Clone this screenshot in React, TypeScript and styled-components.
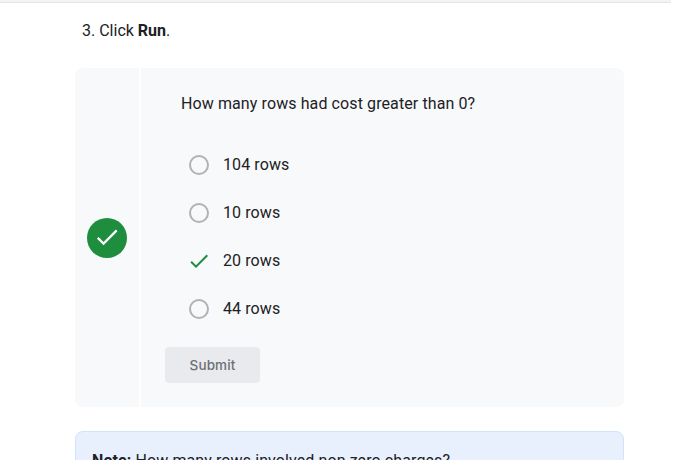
import React from "react";
import styled, { createGlobalStyle } from "styled-components";

const GlobalStyle = createGlobalStyle`
  * { box-sizing: border-box; }
  body {
    margin: 0;
    background: #fff;
    overflow: hidden;
    color: #202124;
    font: 400 16px/24px Roboto, "Noto Sans", sans-serif;
  }
`;

const Page = styled.div`
  height: 460px;
  overflow: hidden;
`;

const TopBar = styled.div`
  width: 671px;
  height: 3px;
  background: #f1f3f4;
  border-bottom: 1px solid #e3e6e9;
`;

const Content = styled.main`
  width: 549px;
  margin-left: 75px;
`;

const Step = styled.p`
  margin: 0;
  padding: 16px 0 25px 7px;
`;

const Quiz = styled.section`
  display: flex;
  gap: 2px;
  height: 339px;
  border-radius: 8px;
  overflow: hidden;
`;

const StatusColumn = styled.div`
  width: 64px;
  display: flex;
  align-items: center;
  justify-content: center;
  background: #f8f9fb;
`;

const StatusBadge = styled.div`
  display: flex;
  align-items: center;
  justify-content: center;
  width: 40px;
  height: 40px;
  padding-bottom: 1px;
  border-radius: 50%;
  background: #1e8e3e;
`;

const QuestionPanel = styled.div`
  flex: 1;
  padding: 24px;
  background: #f8f9fb;
  letter-spacing: 0.1px;
`;

const Question = styled.p`
  margin: 0 0 25px 16px;
`;

const Options = styled.ul`
  margin: 0 0 14px;
  padding: 0;
  list-style: none;
`;

const Option = styled.li`
  display: flex;
  align-items: center;
  gap: 12px;
  height: 48px;
  padding-left: 22px;
`;

const Marker = styled.span`
  display: flex;
  align-items: center;
  justify-content: center;
  width: 24px;
  height: 24px;
`;

const Circle = styled.span`
  width: 20px;
  height: 20px;
  border: 2px solid #b1b2b4;
  border-radius: 50%;
`;

const Submit = styled.button`
  display: block;
  width: 95px;
  height: 36px;
  padding: 0;
  border: 0;
  border-radius: 4px;
  background: #e8eaed;
  color: #6d6f73;
  font: 500 13.5px/36px "Google Sans", Inter, sans-serif;
  letter-spacing: 0.1px;
`;

const Note = styled.aside`
  margin-top: 24px;
  height: 72px;
  padding: 17px 16px;
  border: 1px solid #d2e3fc;
  border-radius: 8px;
  background: #e8f0fe;
  letter-spacing: 0.1px;
`;

function Check({ size, color }: { size: number; color: string }) {
  return (
    <svg width={size} height={size} viewBox="0 0 24 24" fill={color}>
      <path d="M9 16.2 4.8 12l-1.4 1.4L9 19 21 7l-1.4-1.4L9 16.2z" />
    </svg>
  );
}

const answers = [
  { label: "104 rows" },
  { label: "10 rows" },
  { label: "20 rows", correct: true },
  { label: "44 rows" },
];

export default function App() {
  return (
    <Page>
      <GlobalStyle />
      <TopBar />
      <Content>
        <Step>3. Click <b>Run</b>.</Step>
        <Quiz>
          <StatusColumn>
            <StatusBadge><Check size={28} color="#fff" /></StatusBadge>
          </StatusColumn>
          <QuestionPanel>
            <Question>How many rows had cost greater than 0?</Question>
            <Options>
              {answers.map(({ label, correct }) => (
                <Option key={label}>
                  <Marker>{correct ? <Check size={24} color="#1e8e3e" /> : <Circle />}</Marker>
                  {label}
                </Option>
              ))}
            </Options>
            <Submit>Submit</Submit>
          </QuestionPanel>
        </Quiz>
        <Note><b>Note:</b> How many rows involved non zero charges?</Note>
      </Content>
    </Page>
  );
}
